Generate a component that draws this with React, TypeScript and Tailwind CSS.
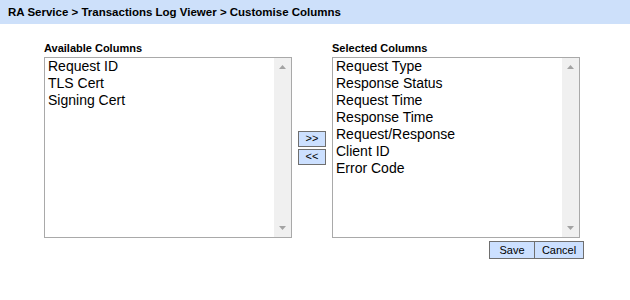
const available = ['Request ID', 'TLS Cert', 'Signing Cert']
const selected = [
  'Request Type',
  'Response Status',
  'Request Time',
  'Response Time',
  'Request/Response',
  'Client ID',
  'Error Code',
]

const ListBox = ({ items }: { items: string[] }) => (
  <div className="flex w-[248px] h-[181px] border border-[#a9a9a9] bg-white">
    <div className="flex-1 pl-[3px] font-['Liberation_Sans',Arial,sans-serif] text-[14px] leading-[17px] text-black">
      {items.map(item => (
        <div key={item}>{item}</div>
      ))}
    </div>
    {/* fake scrollbar */}
    <div className="flex w-[17px] flex-col justify-between bg-[#f0f0f0] py-[6px]">
      <svg width="17" height="5" viewBox="0 0 17 5">
        <path d="M5 5 L8.5 1 L12 5 Z" fill="#a3a3a3" />
      </svg>
      <svg width="17" height="5" viewBox="0 0 17 5">
        <path d="M5 0 L8.5 4 L12 0 Z" fill="#a3a3a3" />
      </svg>
    </div>
  </div>
)

const SmallButton = ({ label, className = '' }: { label: string; className?: string }) => (
  <button
    className={`flex items-center justify-center border border-[#6f6f6f] bg-[#cce0ff] font-['Liberation_Sans',Arial,sans-serif] text-[11px] leading-none text-black ${className}`}
  >
    {label}
  </button>
)

export default function App() {
  return (
    <div className="w-[630px] h-[300px] bg-white font-['Liberation_Sans',Arial,sans-serif]">
      <div className="h-[24px] bg-[#cde0fa] pl-[8px] pt-[5px] text-[11.5px] font-bold leading-[14px] text-black">
        RA Service &gt; Transactions Log Viewer &gt; Customise Columns
      </div>

      <div className="flex items-start pl-[44px] pt-[17px]">
        <div className="flex flex-col">
          <div className="h-[16px] text-[11px] font-bold leading-[14px] text-black">Available Columns</div>
          <ListBox items={available} />
        </div>

        <div className="mt-[16px] flex h-[181px] flex-col justify-center gap-[2px] px-[6px]">
          <SmallButton label=">>" className="h-[16px] w-[28px]" />
          <SmallButton label="<<" className="h-[16px] w-[28px]" />
        </div>

        <div className="flex flex-col">
          <div className="h-[16px] text-[11px] font-bold leading-[14px] text-black">Selected Columns</div>
          <ListBox items={selected} />
          <div className="mt-[3px] mr-[-4px] flex justify-end">
            <SmallButton label="Save" className="h-[18px] w-[46px]" />
            <SmallButton label="Cancel" className="h-[18px] w-[49px] border-l-0" />
          </div>
        </div>
      </div>
    </div>
  )
}
